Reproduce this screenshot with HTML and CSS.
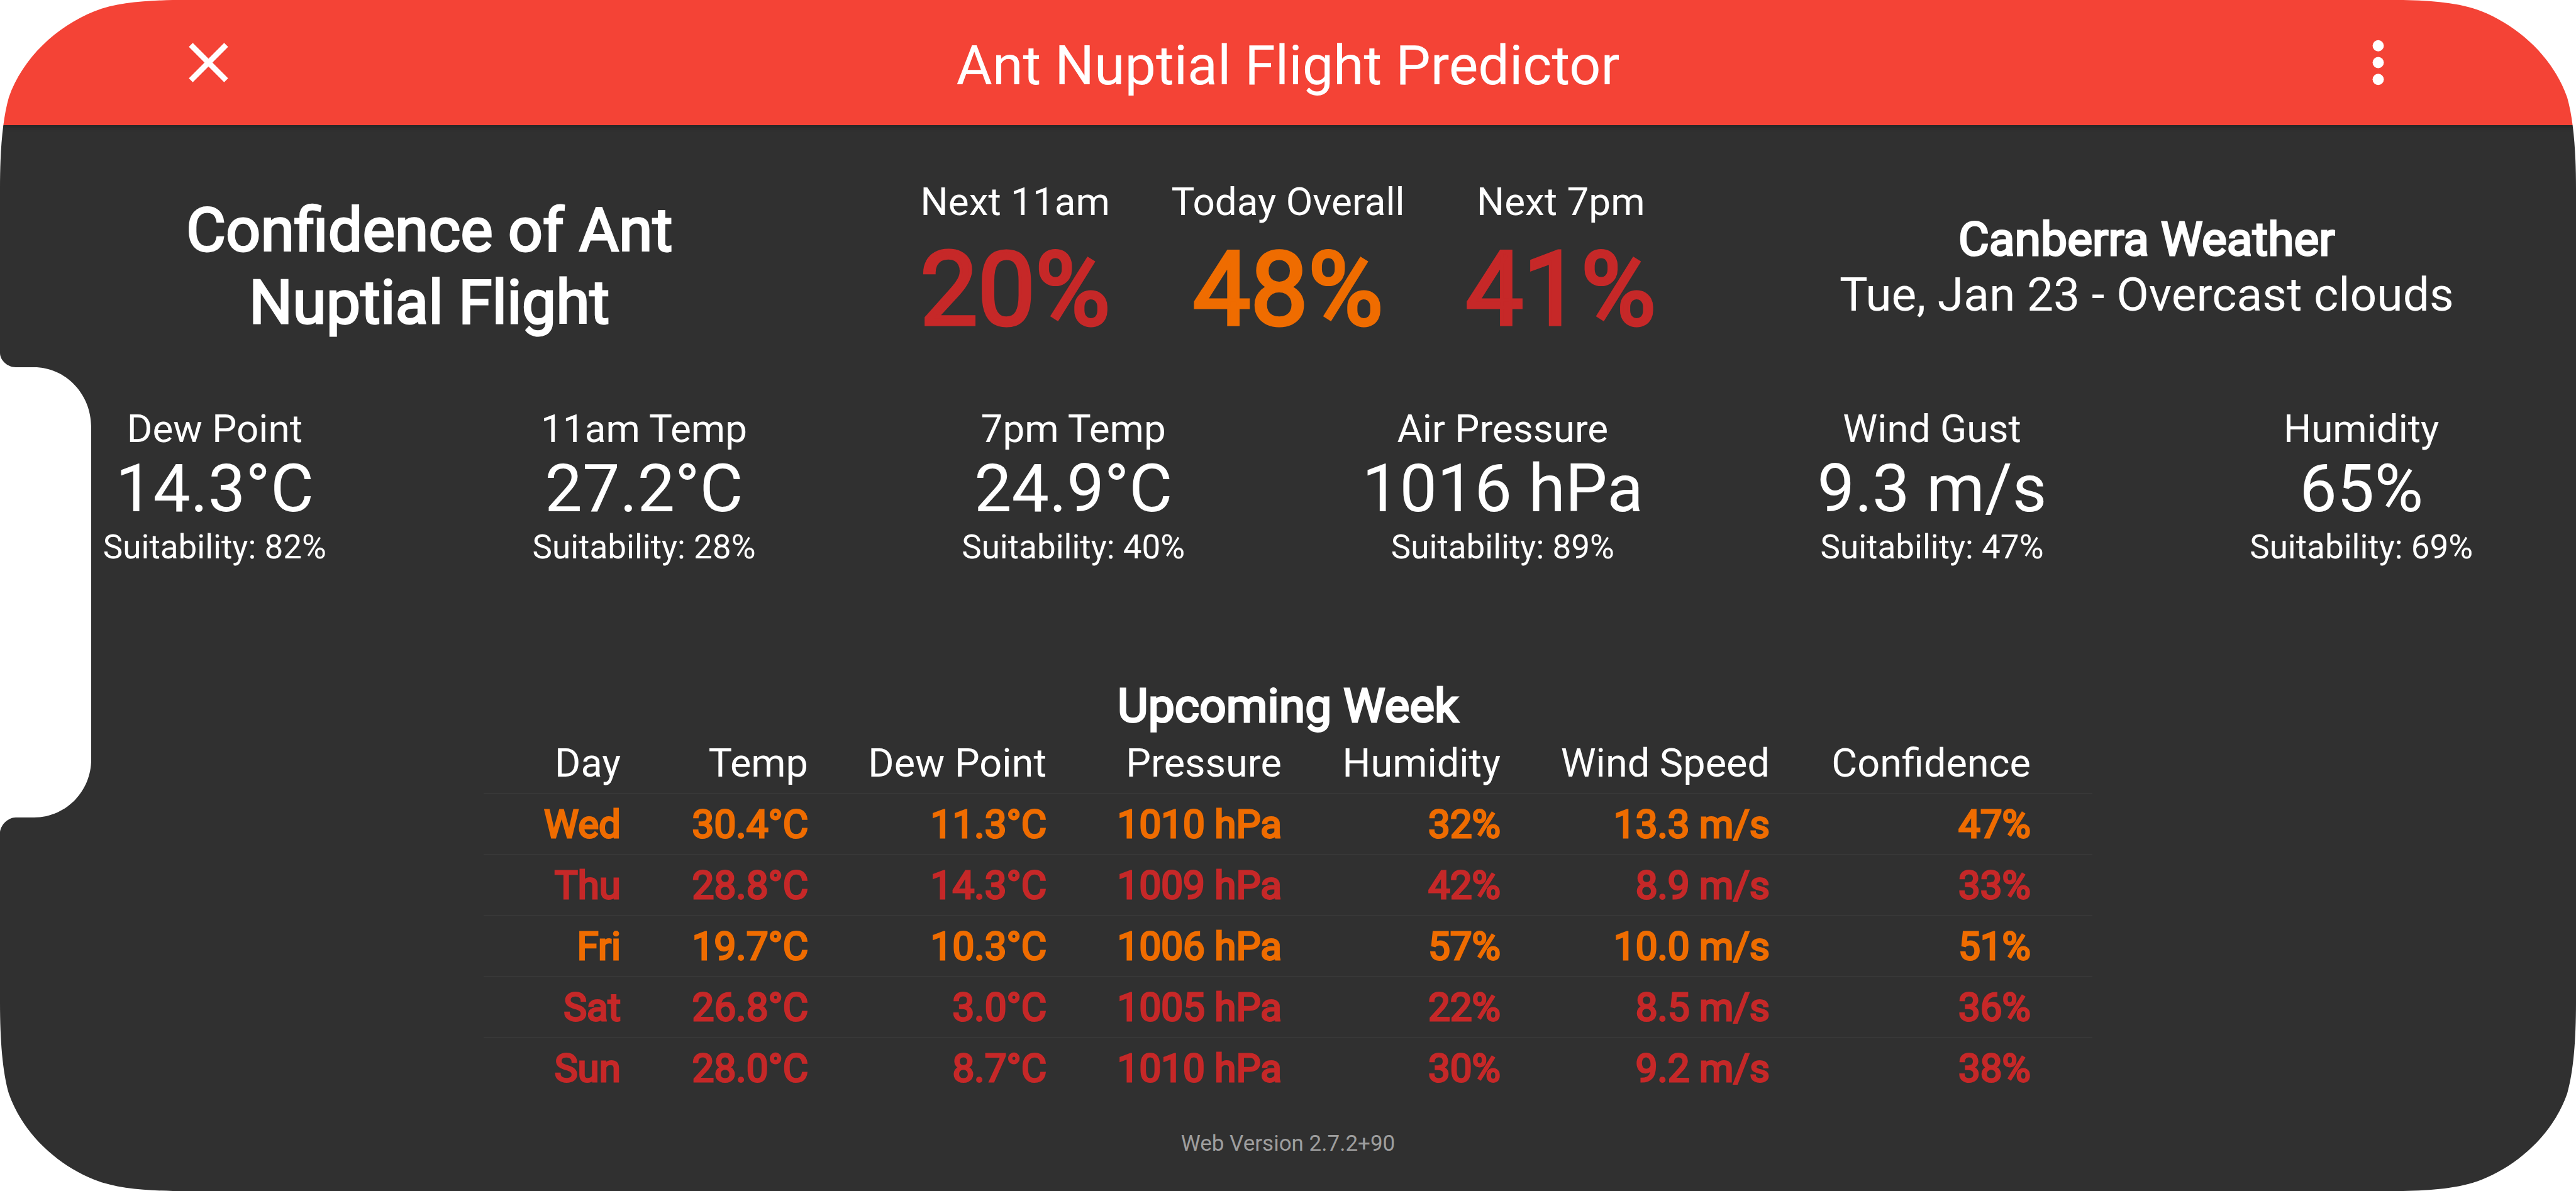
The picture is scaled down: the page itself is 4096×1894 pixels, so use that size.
FILE: index.html
```html
<!DOCTYPE html>
<html lang="en">
<head>
<meta charset="utf-8">
<title>Ant Nuptial Flight Predictor</title>
<link rel="stylesheet" href="styles.css">
</head>
<body>
<div class="screen">
  <header class="app-bar">
    <button class="icon-button close-button" type="button" aria-label="Close">
      <svg class="icon" viewBox="0 0 24 24" aria-hidden="true"><path d="M19 6.41 17.59 5 12 10.59 6.41 5 5 6.41 10.59 12 5 17.59 6.41 19 12 13.41 17.59 19 19 17.59 13.41 12z"/></svg>
    </button>
    <h1 class="app-title">Ant Nuptial Flight Predictor</h1>
    <button class="icon-button more-button" type="button" aria-label="More options">
      <svg class="icon" viewBox="0 0 24 24" aria-hidden="true"><circle cx="12" cy="6" r="2"/><circle cx="12" cy="12" r="2"/><circle cx="12" cy="18" r="2"/></svg>
    </button>
  </header>
  <main>
    <section class="summary">
      <h2 class="headline">Confidence of Ant<br>Nuptial Flight</h2>
      <div class="scores">
        <div class="score"><span class="label">Next 11am</span><span class="percent low">20%</span></div>
        <div class="score"><span class="label">Today Overall</span><span class="percent medium">48%</span></div>
        <div class="score"><span class="label">Next 7pm</span><span class="percent low">41%</span></div>
      </div>
      <div class="weather">
        <h2 class="place">Canberra Weather</h2>
        <p class="conditions">Tue, Jan 23 - Overcast clouds</p>
      </div>
    </section>
    <section class="metrics">
      <div class="metric"><span class="label">Dew Point</span><span class="value">14.3°C</span><span class="suitability">Suitability: 82%</span></div>
      <div class="metric"><span class="label">11am Temp</span><span class="value">27.2°C</span><span class="suitability">Suitability: 28%</span></div>
      <div class="metric"><span class="label">7pm Temp</span><span class="value">24.9°C</span><span class="suitability">Suitability: 40%</span></div>
      <div class="metric"><span class="label">Air Pressure</span><span class="value">1016 hPa</span><span class="suitability">Suitability: 89%</span></div>
      <div class="metric"><span class="label">Wind Gust</span><span class="value">9.3 m/s</span><span class="suitability">Suitability: 47%</span></div>
      <div class="metric"><span class="label">Humidity</span><span class="value">65%</span><span class="suitability">Suitability: 69%</span></div>
    </section>
    <section class="week">
      <h2 class="week-title">Upcoming Week</h2>
      <table class="forecast">
        <colgroup><col class="col-day"><col class="col-temp"><col class="col-dew"><col class="col-pressure"><col class="col-humidity"><col class="col-wind"><col class="col-confidence"></colgroup>
        <thead>
          <tr><th>Day</th><th>Temp</th><th>Dew Point</th><th>Pressure</th><th>Humidity</th><th>Wind Speed</th><th>Confidence</th></tr>
        </thead>
        <tbody>
          <tr class="medium"><td>Wed</td><td>30.4°C</td><td>11.3°C</td><td>1010 hPa</td><td>32%</td><td>13.3 m/s</td><td>47%</td></tr>
          <tr class="low"><td>Thu</td><td>28.8°C</td><td>14.3°C</td><td>1009 hPa</td><td>42%</td><td>8.9 m/s</td><td>33%</td></tr>
          <tr class="medium"><td>Fri</td><td>19.7°C</td><td>10.3°C</td><td>1006 hPa</td><td>57%</td><td>10.0 m/s</td><td>51%</td></tr>
          <tr class="low"><td>Sat</td><td>26.8°C</td><td>3.0°C</td><td>1005 hPa</td><td>22%</td><td>8.5 m/s</td><td>36%</td></tr>
          <tr class="low"><td>Sun</td><td>28.0°C</td><td>8.7°C</td><td>1010 hPa</td><td>30%</td><td>9.2 m/s</td><td>38%</td></tr>
        </tbody>
      </table>
    </section>
  </main>
  <footer class="version">Web Version 2.7.2+90</footer>

  <svg class="notch" viewBox="0 0 145 764" aria-hidden="true"><path d="M0 0C0 12 12 23 25 23H54C104 23 145 65 145 118V647C145 698 104 739 54 739H25C12 739 0 752 0 764Z"/></svg>
  <svg class="corner top-left" viewBox="0 0 275 300" aria-hidden="true"><path id="corner" d="M0 0H275C230 1 185 4 150 18C90 42 36 92 14 155C4 190 0 240 0 300Z"/></svg>
  <svg class="corner top-right" viewBox="0 0 275 300" aria-hidden="true"><use href="#corner"/></svg>
  <svg class="corner bottom-left" viewBox="0 0 275 300" aria-hidden="true"><use href="#corner"/></svg>
  <svg class="corner bottom-right" viewBox="0 0 275 300" aria-hidden="true"><use href="#corner"/></svg>
</div>
</body>
</html>
```
FILE: styles.css
```css
* { box-sizing: border-box; }

body {
  margin: 0;
  background: #fff;
  color: #fff;
  font-family: Roboto, "Liberation Sans", sans-serif;
}

h1, h2, p { margin: 0; font-weight: 400; }

.screen {
  position: relative;
  display: flex;
  flex-direction: column;
  min-height: 100vh;
  overflow: hidden;
  background: #303030;
}

.app-bar {
  display: grid;
  grid-template-columns: 1fr auto 1fr;
  align-items: center;
  height: 199px;
  background: #f44336;
  box-shadow: 0 2px 8px rgba(0, 0, 0, 0.3);
}

.icon-button {
  display: flex;
  padding: 0;
  border: 0;
  background: none;
  color: inherit;
}

.close-button { justify-self: start; margin-left: 278px; }
.more-button { justify-self: end; margin-right: 261px; }

.icon { width: 107px; height: 107px; fill: currentColor; }

.app-title { padding-top: 8px; font-size: 88px; line-height: 104px; }

.summary {
  display: grid;
  grid-template-columns: repeat(3, 1fr);
  align-items: center;
  padding-top: 89px;
  text-align: center;
}

.headline {
  font-size: 97px;
  line-height: 115px;
  -webkit-text-stroke: 3px currentColor;
}

.scores {
  display: grid;
  grid-template-columns: repeat(3, 1fr);
  padding: 0 32px;
}

.score, .metric { display: flex; flex-direction: column; }
.score { gap: 8px; }

.label { font-size: 62px; line-height: 66px; }

.percent {
  font-size: 163px;
  line-height: 197px;
  -webkit-text-stroke: 5px currentColor;
}

.low { color: #c62828; }
.medium { color: #ef6c00; }

.place, .conditions, .week-title { font-size: 75px; line-height: 88px; }
.place, .week-title { -webkit-text-stroke: 3px currentColor; }

.metrics {
  display: grid;
  grid-template-columns: repeat(6, 1fr);
  padding-top: 90px;
  text-align: center;
}

.value { font-size: 106px; line-height: 124px; }

.suitability { font-size: 53px; line-height: 62px; }

.week { padding-top: 177px; }

.week-title { text-align: center; }

.forecast {
  width: 2558px;
  margin: 0 auto;
  border-collapse: collapse;
  table-layout: fixed;
  line-height: 96px;
  text-align: right;
}

.forecast th { padding: 0 49px 0 0; font-size: 63px; font-weight: 400; }
.forecast td { padding: 0 49px 0 0; border-top: 1px solid #444; font-size: 62px; }
.forecast tbody { -webkit-text-stroke: 3px currentColor; }
.forecast th:last-child, .forecast td:last-child { padding-right: 98px; }

.col-day { width: 267px; }
.col-temp { width: 298px; }
.col-dew { width: 379px; }
.col-pressure { width: 374px; }
.col-humidity { width: 348px; }
.col-wind { width: 428px; }
.col-confidence { width: 464px; }

.version {
  padding-top: 51px;
  color: #9e9e9e;
  font-size: 35px;
  line-height: 42px;
  text-align: center;
}

/* Display cutout on the left edge */
.notch {
  position: absolute;
  left: 0;
  top: 561px;
  width: 145px;
  height: 764px;
  fill: #fff;
}

/* Rounded display corners */
.corner {
  position: absolute;
  width: 275px;
  height: 300px;
  fill: #fff;
  pointer-events: none;
}

.top-left { top: 0; left: 0; }
.top-right { top: 0; right: 0; transform: scaleX(-1); }
.bottom-left { bottom: 0; left: 0; transform: scaleY(-1); }
.bottom-right { bottom: 0; right: 0; transform: scale(-1, -1); }
```
